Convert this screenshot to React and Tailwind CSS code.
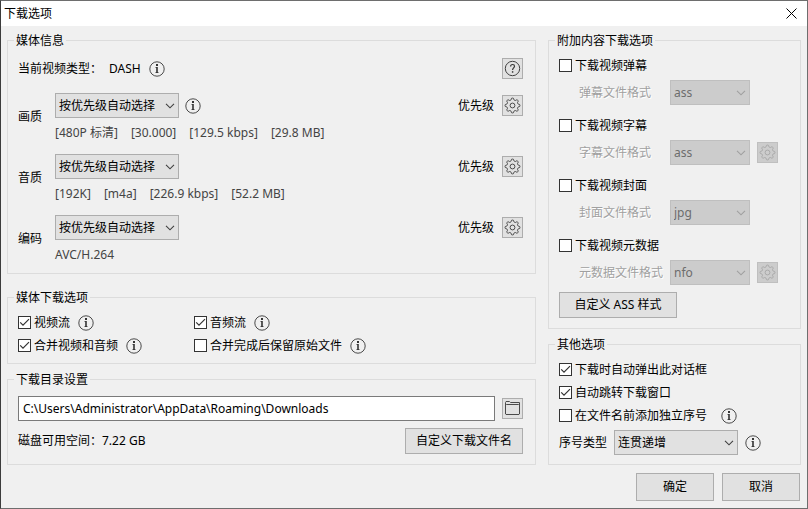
import { useState } from "react";
import clsx from "clsx";

const InfoIcon = () => (
  <svg width="16" height="16" viewBox="0 0 16 16" fill="none" className="shrink-0">
    <circle cx="8" cy="8" r="7.2" stroke="#4a4a4a" />
    <rect x="7" y="3" width="2" height="2" fill="#333" />
    <path d="M6.5 6.5H8M6.5 11.5H9.5" stroke="#555" />
    <path d="M8 6V12" stroke="#333" strokeWidth="1.6" />
  </svg>
);

const HelpIcon = () => (
  <svg width="17" height="17" viewBox="0 0 17 17" fill="none">
    <circle cx="8.5" cy="8.5" r="7.2" stroke="#404040" />
    <path
      d="M6.6 6.4C6.6 5.2 7.4 4.5 8.6 4.5C9.8 4.5 10.5 5.2 10.5 6.3C10.5 7.8 8.6 8 8.6 9.9"
      stroke="#333"
      strokeWidth="1.2"
    />
    <rect x="7.9" y="11.2" width="1.4" height="1.5" fill="#333" />
  </svg>
);

// Eight rounded teeth around the hub
const gearPoints = Array.from({ length: 96 }, (_, i) => {
  const a = (i / 96) * Math.PI * 2;
  const r = 6.5 + 0.95 * Math.tanh(2.2 * Math.cos(8 * a));
  return `${(8.5 + r * Math.cos(a)).toFixed(2)},${(8.5 + r * Math.sin(a)).toFixed(2)}`;
}).join(" ");

const GearIcon = () => (
  <svg width="17" height="17" viewBox="0 0 17 17" fill="none" stroke="currentColor">
    <circle cx="8.5" cy="8.5" r="2.4" />
    <polygon points={gearPoints} strokeLinejoin="round" />
  </svg>
);

const FolderIcon = () => (
  <svg width="17" height="17" viewBox="0 0 17 17" fill="none" stroke="#4a4a4a">
    <path d="M1.5 14V2.5L2 1.5H5.5L6.5 2.5H15.5V14L15 14.5H2Z" />
    <path d="M1.5 5.5L2.5 4.5H14.5L15.5 5.5" />
  </svg>
);

const IconButton = ({ label, disabled, children }) => (
  <button
    type="button"
    aria-label={label}
    disabled={disabled}
    className={clsx(
      "flex size-[21px] shrink-0 items-center justify-center border",
      disabled
        ? "border-[#bfbfbf] bg-[#cccccc] text-[#aaaaaa]"
        : "border-[#adadad] bg-[#e1e1e1] text-[#4a4a4a]"
    )}
  >
    {children}
  </button>
);

const Button = ({ className, children }) => (
  <button type="button" className={clsx("border border-[#adadad] bg-[#e1e1e1]", className)}>
    {children}
  </button>
);

const Select = ({ id, value, wide, disabled, label }) => (
  <div className={clsx("relative h-[25px] shrink-0", wide ? "w-[124px]" : "w-20")}>
    <select
      id={id}
      aria-label={label}
      disabled={disabled}
      defaultValue={value}
      className={clsx(
        "size-full appearance-none border pl-[3px] opacity-100",
        disabled
          ? "border-[#bfbfbf] bg-[#cccccc] text-[#6d6d6d]"
          : "border-[#adadad] bg-[#e1e1e1]"
      )}
    >
      <option>{value}</option>
    </select>
    <svg
      width="10"
      height="6"
      viewBox="0 0 10 6"
      fill="none"
      className="pointer-events-none absolute right-1 top-[10px]"
    >
      <path d="M1 .8L5 4.8L9 .8" stroke={disabled ? "#a0a0a0" : "#404040"} strokeWidth="1.1" />
    </svg>
  </div>
);

const Checkbox = ({ label, defaultChecked = false }) => {
  const [checked, setChecked] = useState(defaultChecked);
  return (
    <label className="flex items-center gap-[3px]">
      <span className="relative size-[13px] shrink-0">
        <input
          type="checkbox"
          checked={checked}
          onChange={(e) => setChecked(e.target.checked)}
          className="block size-full appearance-none border border-[#333333] bg-white"
        />
        {checked && (
          <svg viewBox="0 0 13 13" fill="none" className="pointer-events-none absolute inset-0">
            <path d="M2.2 6.4L5 9.2L11 3.2" stroke="#333" strokeWidth="1.2" />
          </svg>
        )}
      </span>
      {label}
    </label>
  );
};

const Group = ({ title, className, children }) => (
  <fieldset className={clsx("min-w-0 border border-[#dcdcdc] pl-[10px] pr-3", className)}>
    <legend className="-ml-1 h-[18px] px-[2px] leading-5">{title}</legend>
    {children}
  </fieldset>
);

const streams = [
  {
    id: "video",
    label: "画质",
    info: true,
    details: ["[480P 标清]", "[30.000]", "[129.5 kbps]", "[29.8 MB]"],
  },
  { id: "audio", label: "音质", details: ["[192K]", "[m4a]", "[226.9 kbps]", "[52.2 MB]"] },
  { id: "codec", label: "编码", details: ["AVC/H.264"] },
];

const extras = [
  { id: "danmaku", label: "下载视频弹幕", format: "弹幕文件格式", value: "ass" },
  { id: "subtitle", label: "下载视频字幕", format: "字幕文件格式", value: "ass", gear: true },
  { id: "cover", label: "下载视频封面", format: "封面文件格式", value: "jpg" },
  { id: "metadata", label: "下载视频元数据", format: "元数据文件格式", value: "nfo", gear: true },
];

const MediaInfo = () => (
  <Group title="媒体信息" className="mb-2 pb-[10px] pt-[9px]">
    <div className="flex flex-col gap-[13px]">
      <div className="mb-px flex h-[21px] items-center">
        <span className="w-[91px]">当前视频类型：</span>
        <span className="mr-2">DASH</span>
        <InfoIcon />
        <div className="ml-auto">
          <IconButton label="帮助">
            <HelpIcon />
          </IconButton>
        </div>
      </div>
      {streams.map((s) => (
        <div key={s.id} className="flex items-center">
          <label htmlFor={s.id} className="w-[37px]">
            {s.label}
          </label>
          <div className="flex-1">
            <div className="flex items-center">
              <Select id={s.id} value="按优先级自动选择" wide />
              {s.info && (
                <span className="ml-[6px]">
                  <InfoIcon />
                </span>
              )}
              <span className="ml-auto mr-2">优先级</span>
              <IconButton label={s.label + "优先级"}>
                <GearIcon />
              </IconButton>
            </div>
            <div className="mt-[7px] flex gap-[13px] leading-4 text-[#444444]">
              {s.details.map((d) => (
                <span key={d}>{d}</span>
              ))}
            </div>
          </div>
        </div>
      ))}
    </div>
  </Group>
);

const MediaOptions = () => (
  <Group title="媒体下载选项" className="pb-[6px] pt-[5px]">
    <div className="grid auto-rows-[23px] grid-cols-[176px_1fr]">
      <div className="flex items-center gap-2">
        <Checkbox label="视频流" defaultChecked />
        <InfoIcon />
      </div>
      <div className="flex items-center gap-2">
        <Checkbox label="音频流" defaultChecked />
        <InfoIcon />
      </div>
      <div className="flex items-center gap-2">
        <Checkbox label="合并视频和音频" defaultChecked />
        <InfoIcon />
      </div>
      <div className="flex items-center gap-2">
        <Checkbox label="合并完成后保留原始文件" />
        <InfoIcon />
      </div>
    </div>
  </Group>
);

const DownloadFolder = () => (
  <Group title="下载目录设置" className="pb-[10px] pt-2">
    <div className="flex items-center gap-[7px]">
      <input
        type="text"
        aria-label="下载目录"
        defaultValue="C:\Users\Administrator\AppData\Roaming\Downloads"
        className="h-[25px] min-w-0 flex-1 border border-[#7a7a7a] bg-white px-1"
      />
      <IconButton label="浏览">
        <FolderIcon />
      </IconButton>
    </div>
    <div className="mt-[7px] flex items-center justify-between">
      <span>磁盘可用空间：7.22 GB</span>
      <Button className="h-[26px] w-[118px]">自定义下载文件名</Button>
    </div>
  </Group>
);

const ExtraOptions = () => (
  <Group title="附加内容下载选项" className="pb-[10px] pt-[7px]">
    <div className="flex flex-col gap-[11px]">
      {extras.map((x) => (
        <div key={x.id} className="flex flex-col gap-[5px]">
          <div className="flex h-[19px] items-center">
            <Checkbox label={x.label} />
          </div>
          <div className="flex items-center pl-5">
            <label
              htmlFor={x.id}
              className="w-[91px] text-[#a0a0a0] [text-shadow:1px_1px_0_#fff]"
            >
              {x.format}
            </label>
            <Select id={x.id} value={x.value} disabled />
            {x.gear && (
              <span className="ml-[7px]">
                <IconButton label={x.format} disabled>
                  <GearIcon />
                </IconButton>
              </span>
            )}
          </div>
        </div>
      ))}
    </div>
    <Button className="mt-[7px] block h-[26px] w-[118px]">自定义 ASS 样式</Button>
  </Group>
);

const OtherOptions = () => (
  <Group title="其他选项" className="pb-[9px] pt-[5px]">
    <div className="grid auto-rows-[23px]">
      <Checkbox label="下载时自动弹出此对话框" defaultChecked />
      <Checkbox label="自动跳转下载窗口" defaultChecked />
      <div className="flex items-center gap-[14px]">
        <Checkbox label="在文件名前添加独立序号" />
        <InfoIcon />
      </div>
    </div>
    <div className="mt-[3px] flex items-center gap-[7px]">
      <label htmlFor="numbering">序号类型</label>
      <Select id="numbering" value="连贯递增" wide />
      <InfoIcon />
    </div>
  </Group>
);

export default function App() {
  return (
    <div className="min-h-screen border border-[#6e6e6e] border-l-[#3c3c3c] bg-[#f0f0f0] font-['Noto_Sans','Noto_Sans_CJK_SC',sans-serif] text-xs text-black">
      {/* Title bar */}
      <header className="flex h-[25px] items-center justify-between bg-white pl-[3px] pr-[10px]">
        <h1>下载选项</h1>
        <button type="button" aria-label="关闭">
          <svg width="11" height="11" viewBox="0 0 11 11" stroke="#000">
            <path d="M.5 .5L10.5 10.5M10.5 .5L.5 10.5" />
          </svg>
        </button>
      </header>

      <main className="flex gap-3 px-[6px] pt-[5px]">
        <div className="flex min-w-0 flex-1 flex-col gap-[6px]">
          <MediaInfo />
          <MediaOptions />
          <DownloadFolder />
        </div>
        <div className="flex w-[253px] flex-col gap-[6px]">
          <ExtraOptions />
          <OtherOptions />
        </div>
      </main>

      {/* Dialog buttons */}
      <footer className="flex justify-end gap-2 px-[7px] pb-[7px] pt-2">
        <Button className="h-7 w-[78px]">确定</Button>
        <Button className="h-7 w-[78px]">取消</Button>
      </footer>
    </div>
  );
}
